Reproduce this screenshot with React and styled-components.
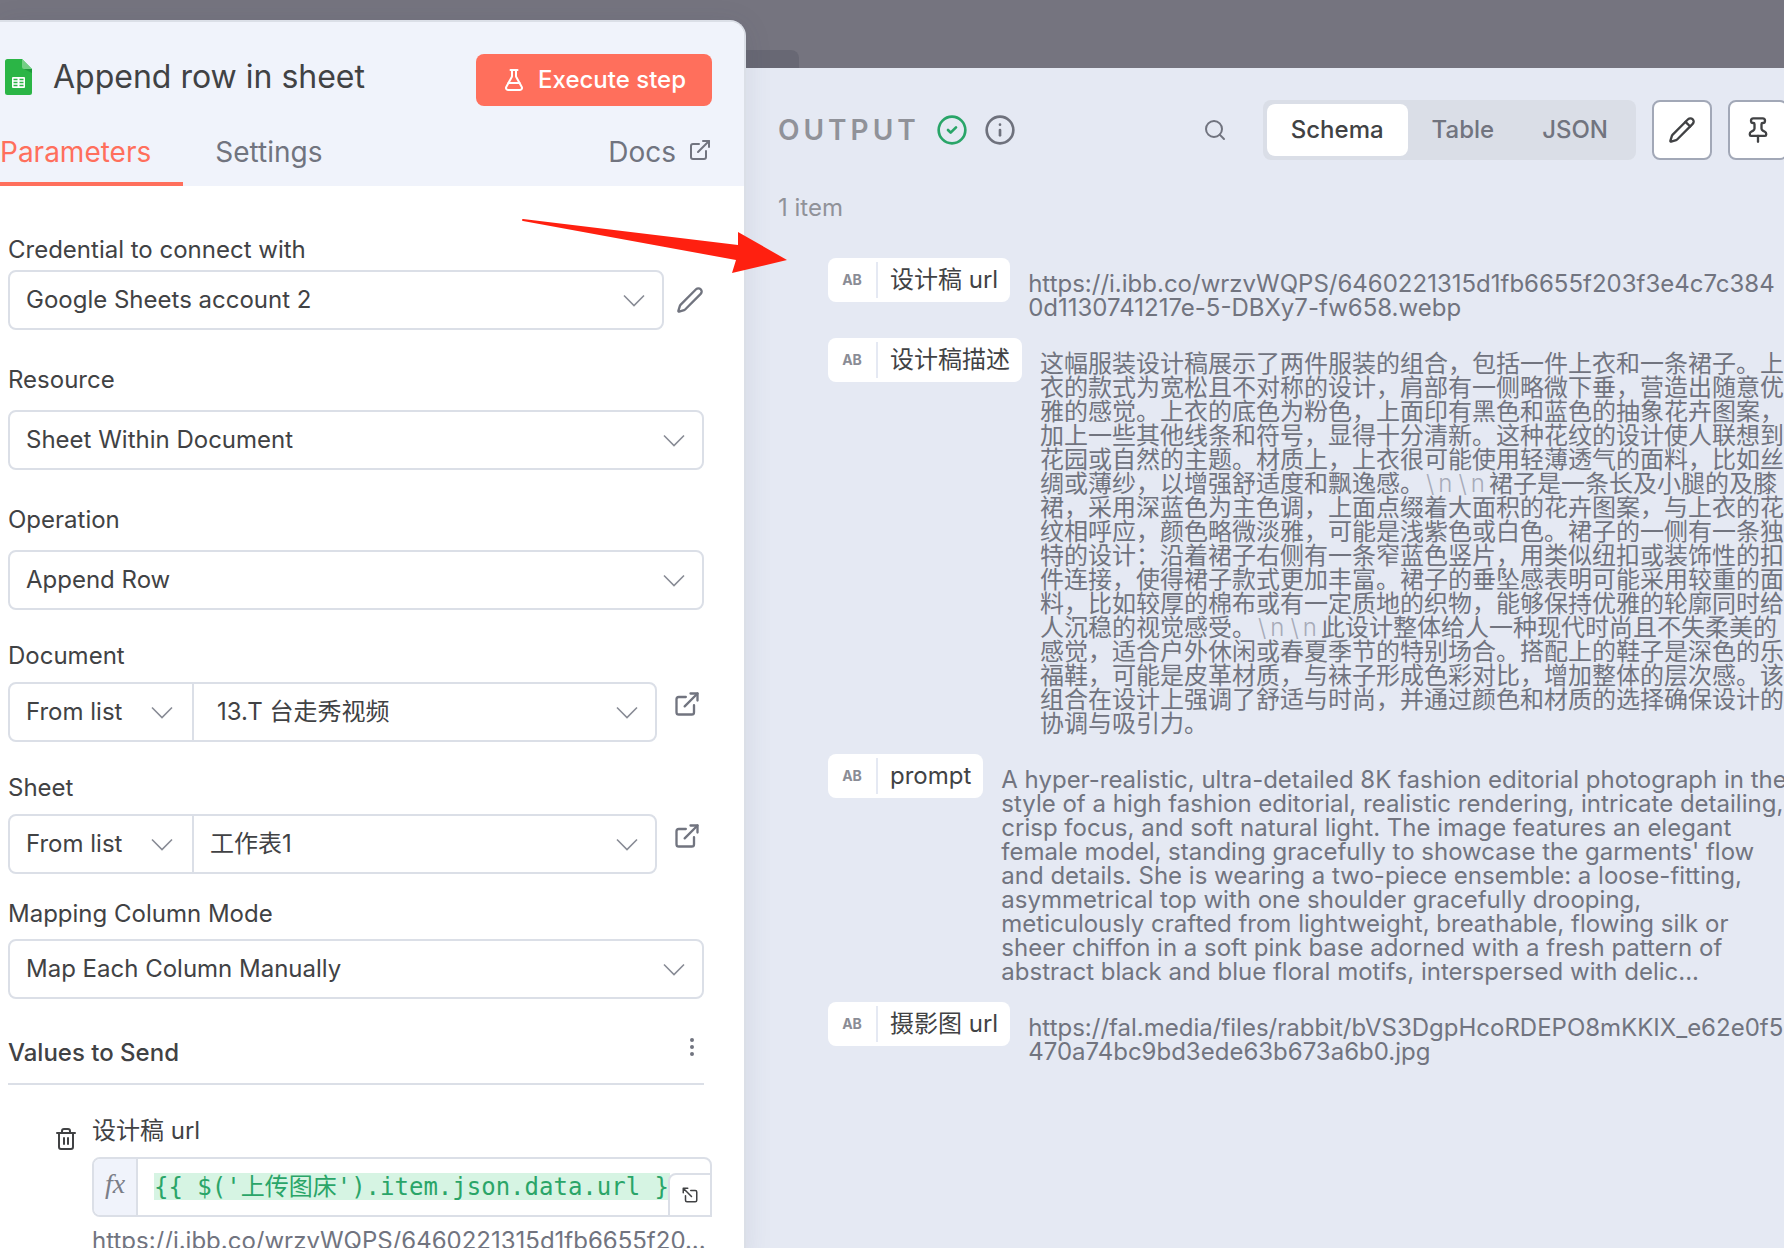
import styled, { createGlobalStyle, css } from "styled-components";
import { useState } from "react";
import {
  CircleCheck,
  EllipsisVertical,
  ExternalLink,
  FlaskConical,
  Info,
  Pen,
  Pencil,
  Pin,
  Search,
  Trash2,
} from "lucide-react";

const GlobalStyle = createGlobalStyle`
  * {
    box-sizing: border-box;
  }
  body {
    margin: 0;
    background: #75747f;
    color: #414244;
    font-family: Inter, "Noto Sans CJK SC", sans-serif;
    font-size: 24px;
    line-height: 32px;
    overflow: hidden;
  }
  button, select, input {
    font: inherit;
    color: inherit;
    margin: 0;
  }
  button {
    cursor: pointer;
  }
`;

const Page = styled.div`
  position: relative;
  display: grid;
  grid-template-columns: minmax(0, 746fr) minmax(0, 1038fr);
  height: 100vh;
  overflow: hidden;
`;

/* ---- node settings (left) ---- */

const NodePanel = styled.section`
  z-index: 1;
  margin-top: 20px;
  background: #ffffff;
  border: 2px solid #dbdfe7;
  border-width: 2px 2px 0 0;
  border-radius: 0 16px 0 0;
  box-shadow: 0 4px 28px rgba(60, 64, 90, 0.1);
`;

const NodeHeader = styled.header`
  padding: 32px 32px 0 0;
  background: #f0f3fb;
  border-radius: 0 14px 0 0;
`;

const TitleRow = styled.div`
  display: flex;
  align-items: flex-start;
  justify-content: space-between;
  padding-left: 5px;
`;

const Title = styled.h1`
  display: flex;
  align-items: center;
  gap: 20px;
  margin: 0;
  font-size: 32px;
  line-height: 46px;
  font-weight: 400;
`;

const ExecuteButton = styled.button`
  display: flex;
  align-items: center;
  gap: 12px;
  height: 52px;
  padding: 0 26px;
  border: 0;
  border-radius: 8px;
  background: #ff6f5c;
  color: #ffffff;
  font-weight: 500;
`;

const Tabs = styled.nav`
  display: flex;
  gap: 32px;
  margin-top: 26px;
  font-size: 28px;
  line-height: 40px;
`;

const Tab = styled.button`
  padding: 0 32px 10px 0;
  border: 0;
  border-bottom: 4px solid ${({ $active }) => ($active ? "#ff6f5c" : "transparent")};
  background: none;
  color: ${({ $active }) => ($active ? "#ff6f5c" : "#71747f")};
`;

const DocsLink = styled.a`
  display: flex;
  gap: 12px;
  margin-left: auto;
  color: #71747f;
  text-decoration: none;
  svg {
    margin-top: 6px;
  }
`;

const Form = styled.form`
  padding: 48px 40px 0 8px;
`;

const Field = styled.div`
  display: flex;
  flex-direction: column;
  gap: ${({ $gap }) => $gap}px;
  margin-bottom: ${({ $after }) => $after}px;
`;

const FieldRow = styled.div`
  display: flex;
  align-items: ${({ $top }) => ($top ? "flex-start" : "center")};
  gap: 12px;
`;

const SelectGroup = styled.div`
  display: flex;
  flex: 1;
  min-width: 0;
  border: 2px solid #dbdfe7;
  border-radius: 8px;
`;

const SelectBox = styled.span`
  display: grid;
  align-items: center;
  flex: ${({ $width }) => ($width ? `0 0 ${$width}px` : "1")};
  min-width: 0;
  & + & {
    border-left: 2px solid #dbdfe7;
  }
  select,
  svg {
    grid-area: 1 / 1;
  }
  select {
    width: 100%;
    height: 56px;
    padding: 0 52px 0 ${({ $indent }) => $indent || 16}px;
    border: 0;
    background: none;
    appearance: none;
    outline: none;
  }
  svg {
    justify-self: end;
    margin-right: ${({ $width }) => ($width ? 18 : 16)}px;
    pointer-events: none;
  }
`;

const IconButton = styled.button`
  display: flex;
  padding: 0;
  border: 0;
  background: none;
  color: ${({ $dark }) => ($dark ? "#414244" : "#71747f")};
  ${({ $space }) => $space && css`margin: ${$space};`}
`;

const ValuesHeader = styled.div`
  display: flex;
  align-items: flex-start;
  justify-content: space-between;
  padding-bottom: 14px;
  border-bottom: 2px solid #dbdfe7;
  h2 {
    margin: 2px 0 0;
    font-size: 24px;
    font-weight: 500;
  }
`;

const ValueItem = styled.div`
  display: flex;
  align-items: flex-start;
  gap: 14px;
  margin: 30px -8px 0 46px;
`;

const ValueBody = styled.div`
  flex: 1;
  min-width: 0;
`;

const Expression = styled.div`
  position: relative;
  display: flex;
  height: 60px;
  margin: 10px 0 8px;
  border: 2px solid #dbdfe7;
  border-radius: 8px 8px 0 8px;
`;

const Fx = styled.span`
  width: 44px;
  flex: none;
  border-right: 2px solid #dbdfe7;
  border-radius: 6px 0 0 6px;
  background: #f0f3fb;
  color: #7b7e88;
  font: italic 28px/50px "Liberation Serif", serif;
  text-align: center;
`;

const Code = styled.input`
  flex: 1;
  min-width: 0;
  height: 27px;
  margin: 14px 40px 0 16px;
  padding: 0;
  border: 0;
  outline: none;
  background: #d6f4e3;
  && {
    color: #2aa568;
    font-family: "DejaVu Sans Mono", "Noto Sans CJK SC", monospace;
  }
`;

const ExpandButton = styled.button`
  position: absolute;
  right: -2px;
  bottom: -2px;
  display: grid;
  place-items: center;
  width: 44px;
  height: 44px;
  padding: 0;
  border: 2px solid #dbdfe7;
  border-radius: 8px 0 0 0;
  background: #ffffff;
`;

const Preview = styled.div`
  color: #71747f;
  white-space: nowrap;
  overflow: hidden;
`;

/* ---- output (right) ---- */

const OutputColumn = styled.section`
  display: flex;
  flex-direction: column;
`;

const Backdrop = styled.div`
  display: flex;
  align-items: flex-end;
  height: 68px;
  &::before {
    content: "";
    width: 53px;
    height: 18px;
    border-radius: 0 8px 0 0;
    background: #686874;
  }
`;

/* the panel runs a little past the right edge of the window */
const OutputPanel = styled.div`
  flex: 1;
  margin-right: -4px;
  padding: 32px 0 0 32px;
  background: #e5e9f3;
`;

const Toolbar = styled.div`
  display: flex;
  align-items: center;
`;

const OutputTitle = styled.h2`
  margin: 0 16px 0 0;
  color: #909299;
  font-size: 28px;
  font-weight: 600;
  letter-spacing: 4px;
`;

const Status = styled.span`
  display: flex;
  gap: 16px;
  margin-right: auto;
  color: #6e717c;
`;

const Segmented = styled.div`
  display: flex;
  margin: 0 16px 0 36px;
  padding: 4px;
  border-radius: 8px;
  background: #dadee7;
`;

const Segment = styled.button`
  height: 52px;
  padding: 0 24px;
  border: 0;
  border-radius: 8px;
  background: ${({ $active }) => ($active ? "#ffffff" : "none")};
  color: ${({ $active }) => ($active ? "#414244" : "#71747f")};
  font-weight: 500;
`;

const SquareButton = styled.button`
  display: grid;
  place-items: center;
  flex: none;
  width: 60px;
  height: 60px;
  padding: 0;
  border: 2px solid #a2a8b7;
  border-radius: 8px;
  background: #ffffff;
  & + & {
    margin-left: 16px;
  }
`;

const ItemCount = styled.p`
  margin: 32px 0 34px;
  color: #909299;
`;

const SchemaList = styled.div`
  display: flex;
  flex-direction: column;
  gap: 18px;
  padding-left: 50px;
`;

const SchemaRow = styled.div`
  display: flex;
  align-items: flex-start;
  gap: 18px;
`;

const Pill = styled.div`
  display: flex;
  align-items: center;
  flex: none;
  height: 44px;
  padding-right: 12px;
  border-radius: 8px;
  background: #ffffff;
  white-space: nowrap;
`;

const TypeTag = styled.span`
  width: 50px;
  height: 36px;
  margin-right: 12px;
  border-right: 2px solid #e5e9f3;
  color: #8a8c95;
  font-size: 14px;
  font-weight: 700;
  line-height: 36px;
  text-align: center;
`;

const Value = styled.div`
  flex: 1;
  min-width: 0;
  padding-top: 14px;
  color: #71747f;
  line-height: 24px;
  overflow-wrap: anywhere;
  word-break: ${({ $breakAll }) => ($breakAll ? "break-all" : "normal")};
  text-spacing-trim: space-all;
`;

const Newline = styled.span`
  padding-left: 2px;
  color: #a7abb9;
  font-weight: 300;
  letter-spacing: 4px;
`;

/* red pointer laid over both panels */
const Pointer = styled.svg`
  position: absolute;
  z-index: 2;
  left: 520px;
  top: 214px;
  width: 270px;
  height: 62px;
  pointer-events: none;
`;

const Chevron = () => (
  <svg width="24" height="24" viewBox="0 0 24 24" fill="none" stroke="#888b95" strokeWidth="1.600">
    <path d="M2 7.500l10 10 10-10" />
  </svg>
);

const SheetsIcon = () => (
  <svg width="28" height="36" viewBox="0 0 28 36">
    <path d="M2.500 0H17l10 10v23.500a2.500 2.500 0 0 1-2.500 2.500h-22A2.500 2.500 0 0 1 0 33.500v-31A2.500 2.500 0 0 1 2.500 0z" fill="#2bb546" />
    <path d="M18 9.500l9 4.500v-4z" fill="#1e9a3c" />
    <path d="M17 0l10 10h-8a2 2 0 0 1-2-2z" fill="#74cf85" />
    <rect x="7" y="18" width="13" height="11" rx="1" fill="#fff" />
    <path d="M8.500 20.500h4M14.500 20.500h4M8.500 23.500h4M14.500 23.500h4M8.500 26.500h4M14.500 26.500h4" stroke="#2bb546" strokeWidth="1.500" />
  </svg>
);

const ExpandIcon = () => (
  <svg width="18" height="18" viewBox="0 0 24 24" fill="none" stroke="#414244" strokeWidth="2" strokeLinecap="round" strokeLinejoin="round">
    <path d="M9 3H3v6M14 14 3 3" />
    <path d="M6 13v6a2 2 0 0 0 2 2h11a2 2 0 0 0 2-2V8a2 2 0 0 0-2-2h-6" />
  </svg>
);

function Dropdown({ id, label, value, width, indent }) {
  return (
    <SelectBox $width={width} $indent={indent}>
      <select id={id} aria-label={label} defaultValue={value}>
        <option>{value}</option>
      </select>
      <Chevron />
    </SelectBox>
  );
}

function SelectField({ id, label, value, gap, after, children }) {
  return (
    <Field $gap={gap} $after={after}>
      <label htmlFor={id}>{label}</label>
      <FieldRow>
        <SelectGroup>
          <Dropdown id={id} value={value} />
        </SelectGroup>
        {children}
      </FieldRow>
    </Field>
  );
}

function ResourceField({ id, label, value, after, indent }) {
  return (
    <Field $gap={10} $after={after}>
      <label htmlFor={id}>{label}</label>
      <FieldRow $top>
        <SelectGroup>
          <Dropdown label={label + " mode"} value="From list" width={182} />
          <Dropdown id={id} value={value} indent={indent} />
        </SelectGroup>
        <IconButton type="button" aria-label={"Open " + label} $space="8px 3px 0 4px">
          <ExternalLink size={28} />
        </IconButton>
      </FieldRow>
    </Field>
  );
}

const NL = () => <Newline>\n</Newline>;

const rows = [
  {
    name: "设计稿 url",
    breakAll: true,
    value: "https://i.ibb.co/wrzvWQPS/6460221315d1fb6655f203f3e4c7c3840d1130741217e-5-DBXy7-fw658.webp",
  },
  {
    name: "设计稿描述",
    value: (
      <>
        这幅服装设计稿展示了两件服装的组合，包括一件上衣和一条裙子。上衣的款式为宽松且不对称的设计，肩部有一侧略微下垂，营造出随意优雅的感觉。上衣的底色为粉色，上面印有黑色和蓝色的抽象花卉图案，加上一些其他线条和符号，显得十分清新。这种花纹的设计使人联想到花园或自然的主题。材质上，上衣很可能使用轻薄透气的面料，比如丝绸或薄纱，以增强舒适度和飘逸感。
        <NL />
        <NL />
        裙子是一条长及小腿的及膝裙，采用深蓝色为主色调，上面点缀着大面积的花卉图案，与上衣的花纹相呼应，颜色略微淡雅，可能是浅紫色或白色。裙子的一侧有一条独特的设计：沿着裙子右侧有一条窄蓝色竖片，用类似纽扣或装饰性的扣件连接，使得裙子款式更加丰富。裙子的垂坠感表明可能采用较重的面料，比如较厚的棉布或有一定质地的织物，能够保持优雅的轮廓同时给人沉稳的视觉感受。
        <NL />
        <NL />
        此设计整体给人一种现代时尚且不失柔美的感觉，适合户外休闲或春夏季节的特别场合。搭配上的鞋子是深色的乐福鞋，可能是皮革材质，与袜子形成色彩对比，增加整体的层次感。该组合在设计上强调了舒适与时尚，并通过颜色和材质的选择确保设计的协调与吸引力。
      </>
    ),
  },
  {
    name: "prompt",
    value:
      "A hyper-realistic, ultra-detailed 8K fashion editorial photograph in the style of a high fashion editorial, realistic rendering, intricate detailing, crisp focus, and soft natural light. The image features an elegant female model, standing gracefully to showcase the garments' flow and details. She is wearing a two-piece ensemble: a loose-fitting, asymmetrical top with one shoulder gracefully drooping, meticulously crafted from lightweight, breathable, flowing silk or sheer chiffon in a soft pink base adorned with a fresh pattern of abstract black and blue floral motifs, interspersed with delic...",
  },
  {
    name: "摄影图 url",
    breakAll: true,
    value: "https://fal.media/files/rabbit/bVS3DgpHcoRDEPO8mKKIX_e62e0f5470a74bc9bd3ede63b673a6b0.jpg",
  },
];

export default function App() {
  const [tab, setTab] = useState("Parameters");
  const [view, setView] = useState("Schema");

  return (
    <Page>
      <GlobalStyle />
      <NodePanel>
        <NodeHeader>
          <TitleRow>
            <Title>
              <SheetsIcon />
              Append row in sheet
            </Title>
            <ExecuteButton>
              <FlaskConical size={24} />
              Execute step
            </ExecuteButton>
          </TitleRow>
          <Tabs>
            {["Parameters", "Settings"].map((name) => (
              <Tab key={name} $active={tab === name} onClick={() => setTab(name)}>
                {name}
              </Tab>
            ))}
            <DocsLink href="#docs">
              Docs
              <ExternalLink size={24} />
            </DocsLink>
          </Tabs>
        </NodeHeader>

        <Form onSubmit={(e) => e.preventDefault()}>
          <SelectField id="credential" label="Credential to connect with" value="Google Sheets account 2" gap={4} after={34}>
            <IconButton type="button" aria-label="Edit credential">
              <Pen size={28} />
            </IconButton>
          </SelectField>
          <SelectField id="resource" label="Resource" value="Sheet Within Document" gap={14} after={34} />
          <SelectField id="operation" label="Operation" value="Append Row" gap={14} after={30} />
          <ResourceField id="document" label="Document" value="13.T 台走秀视频" after={30} indent={23} />
          <ResourceField id="sheet" label="Sheet" value="工作表1" after={24} />
          <SelectField id="mapping" label="Mapping Column Mode" value="Map Each Column Manually" gap={9} after={36} />

          <ValuesHeader>
            <h2>Values to Send</h2>
            <IconButton type="button" aria-label="More options">
              <EllipsisVertical size={24} />
            </IconButton>
          </ValuesHeader>
          <ValueItem>
            <IconButton type="button" aria-label="Delete value" $dark $space="12px 0 0">
              <Trash2 size={24} />
            </IconButton>
            <ValueBody>
              <label htmlFor="design-url">设计稿 url</label>
              <Expression>
                <Fx>fx</Fx>
                <Code id="design-url" spellCheck={false} defaultValue="{{ $('上传图床').item.json.data.url }}" />
                <ExpandButton type="button" aria-label="Expand editor">
                  <ExpandIcon />
                </ExpandButton>
              </Expression>
              <Preview>https://i.ibb.co/wrzvWQPS/6460221315d1fb6655f20...</Preview>
            </ValueBody>
          </ValueItem>
        </Form>
      </NodePanel>

      <OutputColumn>
        <Backdrop />
        <OutputPanel>
          <Toolbar>
            <OutputTitle>OUTPUT</OutputTitle>
            <Status>
              <CircleCheck size={32} color="#29a568" />
              <Info size={32} />
            </Status>
            <IconButton aria-label="Search output">
              <Search size={24} />
            </IconButton>
            <Segmented>
              {["Schema", "Table", "JSON"].map((name) => (
                <Segment key={name} $active={view === name} onClick={() => setView(name)}>
                  {name}
                </Segment>
              ))}
            </Segmented>
            <SquareButton aria-label="Edit output">
              <Pencil size={28} />
            </SquareButton>
            <SquareButton aria-label="Pin data">
              <Pin size={28} />
            </SquareButton>
          </Toolbar>
          <ItemCount>1 item</ItemCount>
          <SchemaList>
            {rows.map((row) => (
              <SchemaRow key={row.name}>
                <Pill>
                  <TypeTag>AB</TypeTag>
                  {row.name}
                </Pill>
                <Value $breakAll={row.breakAll}>{row.value}</Value>
              </SchemaRow>
            ))}
          </SchemaList>
        </OutputPanel>
      </OutputColumn>

      <Pointer viewBox="0 0 270 62" fill="#ff2010">
        <path d="M3 5 218 31V18L267 46 212 59l4-13L3 7a1 1 0 0 1 0-2z" />
      </Pointer>
    </Page>
  );
}
